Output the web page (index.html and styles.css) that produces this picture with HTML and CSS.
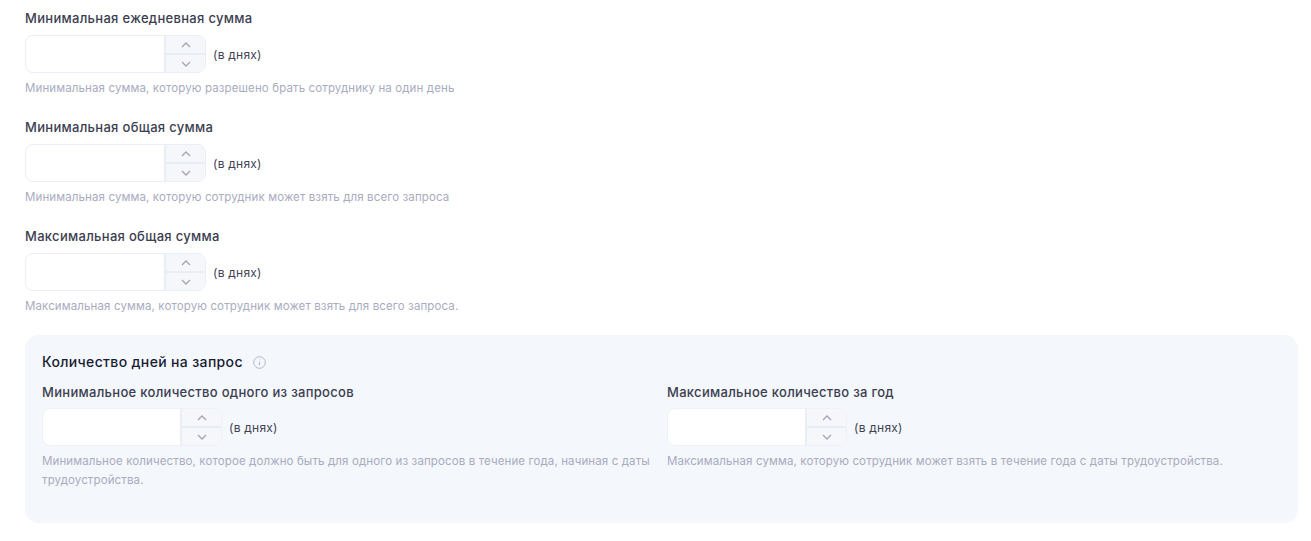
FILE: index.html
```html
<!DOCTYPE html>
<html>

<head>
	<meta charset="UTF-8">
	<title></title>
	<link rel="stylesheet" href="styles.css">
</head>

<body>
	<div id="content">
		<div class="field">
			<label>Минимальная ежедневная сумма</label>
			<div class="row">
				<div class="number">
					<div class="number-input"></div>
					<div class="number-btns">
						<span class="up"><svg width="10" height="6" viewBox="0 0 10 6"><path d="M1 5L5 1L9 5" /></svg></span>
						<span class="down"><svg width="10" height="6" viewBox="0 0 10 6"><path d="M1 1L5 5L9 1" /></svg></span>
					</div>
				</div>
				<span class="unit">(в днях)</span>
			</div>
			<p class="hint">Минимальная сумма, которую разрешено брать сотруднику на один день</p>
		</div>
		<div class="field">
			<label>Минимальная общая сумма</label>
			<div class="row">
				<div class="number">
					<div class="number-input"></div>
					<div class="number-btns">
						<span class="up"><svg width="10" height="6" viewBox="0 0 10 6"><path d="M1 5L5 1L9 5" /></svg></span>
						<span class="down"><svg width="10" height="6" viewBox="0 0 10 6"><path d="M1 1L5 5L9 1" /></svg></span>
					</div>
				</div>
				<span class="unit">(в днях)</span>
			</div>
			<p class="hint">Минимальная сумма, которую сотрудник может взять для всего запроса</p>
		</div>
		<div class="field last">
			<label>Максимальная общая сумма</label>
			<div class="row">
				<div class="number">
					<div class="number-input"></div>
					<div class="number-btns">
						<span class="up"><svg width="10" height="6" viewBox="0 0 10 6"><path d="M1 5L5 1L9 5" /></svg></span>
						<span class="down"><svg width="10" height="6" viewBox="0 0 10 6"><path d="M1 1L5 5L9 1" /></svg></span>
					</div>
				</div>
				<span class="unit">(в днях)</span>
			</div>
			<p class="hint">Максимальная сумма, которую сотрудник может взять для всего запроса.</p>
		</div>

		<div class="panel">
			<div class="panel-title">
				Количество дней на запрос
				<svg class="info" width="13" height="13" viewBox="0 0 13 13">
					<circle cx="6.5" cy="6.5" r="5.8" />
					<path d="M6.8 5.6L6.2 9.4M6.9 3.5V4.2" />
				</svg>
			</div>
			<div class="cols">
				<div class="field">
					<label>Минимальное количество одного из запросов</label>
					<div class="row">
						<div class="number">
							<div class="number-input"></div>
							<div class="number-btns">
								<span class="up"><svg width="10" height="6" viewBox="0 0 10 6"><path d="M1 5L5 1L9 5" /></svg></span>
								<span class="down"><svg width="10" height="6" viewBox="0 0 10 6"><path d="M1 1L5 5L9 1" /></svg></span>
							</div>
						</div>
						<span class="unit">(в днях)</span>
					</div>
					<p class="hint">Минимальное количество, которое должно быть для одного из запросов в течение года, начиная с даты трудоустройства.</p>
				</div>
				<div class="field">
					<label>Максимальное количество за год</label>
					<div class="row">
						<div class="number">
							<div class="number-input"></div>
							<div class="number-btns">
								<span class="up"><svg width="10" height="6" viewBox="0 0 10 6"><path d="M1 5L5 1L9 5" /></svg></span>
								<span class="down"><svg width="10" height="6" viewBox="0 0 10 6"><path d="M1 1L5 5L9 1" /></svg></span>
							</div>
						</div>
						<span class="unit">(в днях)</span>
					</div>
					<p class="hint">Максимальная сумма, которую сотрудник может взять в течение года с даты трудоустройства.</p>
				</div>
			</div>
		</div>
	</div>
</body>

</html>
```

FILE: styles.css
```css
html,
body {
	margin: 0;
	background: #fff;
}

body {
	font-family: Inter, "Noto Sans", sans-serif;
	color: #3f4254;
}

p {
	margin: 0;
}

#content {
	padding: 9px 13px 0 25px;
}

.field {
	margin-bottom: 20px;
}

.field.last {
	margin-bottom: 19px;
}

.field label {
	display: block;
	font-size: 13px;
	font-weight: 500;
	line-height: 18px;
	letter-spacing: 0.3px;
	color: #3b3e50;
}

.row {
	display: flex;
	align-items: center;
	margin-top: 8px;
}

.number {
	display: flex;
	width: 181px;
	height: 38px;
	box-sizing: border-box;
	border: 1px solid #eaeef6;
	border-radius: 8px;
	background: #fff;
	overflow: hidden;
}

.number-input {
	flex: 1;
}

.number-btns {
	width: 41px;
	display: flex;
	flex-direction: column;
	background: #f5f7fb;
	border-left: 2px solid #e9edf4;
	box-sizing: border-box;
}

.number-btns span {
	flex: 1;
	display: flex;
	align-items: center;
	justify-content: center;
}

.number-btns .up {
	border-bottom: 2px solid #e9edf4;
}

.number-btns svg path {
	fill: none;
	stroke: #a1a5b7;
	stroke-width: 1.3;
}

.unit {
	margin-left: 7px;
	font-size: 12px;
	letter-spacing: 0.25px;
	color: #3f4254;
}

.hint {
	margin-top: 6px;
	font-size: 11.5px;
	line-height: 19px;
	letter-spacing: 0.12px;
	color: #a9abc0;
}

.panel {
	width: 1273px;
	height: 188px;
	box-sizing: border-box;
	padding: 17px 17px 0;
	background: #f4f7fb;
	border-radius: 14px;
}

.panel-title {
	display: flex;
	align-items: center;
	font-size: 14px;
	font-weight: 500;
	line-height: 20px;
	letter-spacing: 0.35px;
	color: #181c32;
}

.info {
	margin-left: 10px;
}

.info circle,
.info path {
	fill: none;
	stroke: #b5b8c8;
	stroke-width: 1;
}

.cols {
	display: grid;
	grid-template-columns: 625px 1fr;
	margin-top: 11px;
}

.cols .field {
	margin-bottom: 0;
}

.cols .row {
	margin-top: 7px;
}

.cols .number {
	width: 180px;
	border-color: #eef1f7;
}
```
